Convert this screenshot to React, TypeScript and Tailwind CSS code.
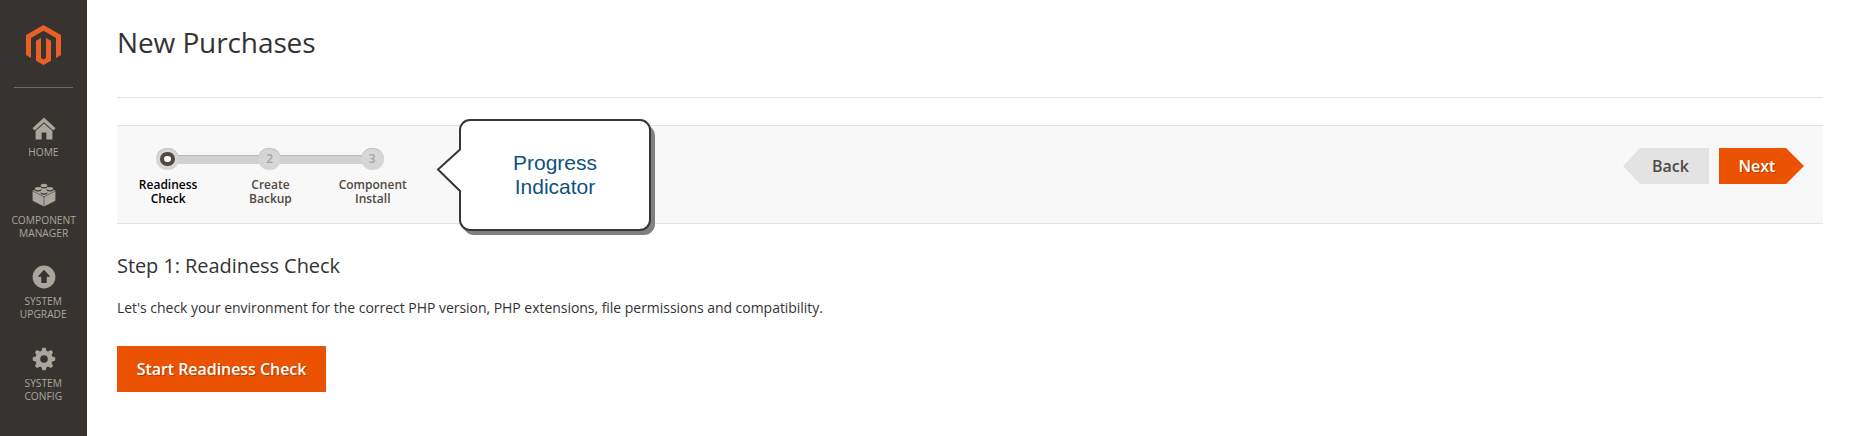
import React from "react";

function HomeIcon() {
  return (
    <svg width="24" height="24" viewBox="0 0 24 24" fill="#aaa69d">
      <path d="M12 0.6 L0.5 11.2 L2.8 13.6 L12 5.2 L21.2 13.6 L23.5 11.2 Z" />
      <path d="M12 6.4 L3.6 14 V22.4 H9.6 V15.4 H14.4 V22.4 H20.4 V14 Z" />
    </svg>
  );
}

function BrickIcon() {
  return (
    <svg width="24" height="24" viewBox="0 0 24 24">
      <path d="M12 2.2 L23.4 7.8 V17.8 L12 23.6 L0.6 17.8 V7.8 Z" fill="#aaa69d" />
      <path d="M0.8 8 L12 13.8 L23.2 8 M12 13.8 V23.6" fill="none" stroke="#5a5651" strokeWidth="0.8" />
      <g fill="#373330">
        <ellipse cx="12" cy="3.5" rx="3.4" ry="1.9" />
        <ellipse cx="6.1" cy="6.6" rx="3.4" ry="1.9" />
        <ellipse cx="17.9" cy="6.6" rx="3.4" ry="1.9" />
        <ellipse cx="12" cy="9.8" rx="3.4" ry="1.9" />
      </g>
      <g fill="#aaa69d">
        <ellipse cx="12" cy="2.5" rx="3.3" ry="1.7" />
        <ellipse cx="6.1" cy="5.6" rx="3.3" ry="1.7" />
        <ellipse cx="17.9" cy="5.6" rx="3.3" ry="1.7" />
        <ellipse cx="12" cy="8.8" rx="3.3" ry="1.7" />
      </g>
    </svg>
  );
}

function UpgradeIcon() {
  return (
    <svg width="24" height="24" viewBox="0 0 24 24">
      <circle cx="12" cy="12" r="11.4" fill="#aaa69d" />
      <path d="M12 4.8 L18.3 11.8 H14.7 V18 H9.3 V11.8 H5.7 Z" fill="#373330" />
    </svg>
  );
}

const gearTurns = ["rotate(0 12 12)", "rotate(45 12 12)", "rotate(90 12 12)", "rotate(135 12 12)"];

function GearIcon() {
  return (
    <svg width="24" height="24" viewBox="0 0 24 24">
      <g fill="#aaa69d">
        <circle cx="12" cy="12" r="8.6" />
        {gearTurns.map((t) => (
          <path key={t} transform={t} d="M9.2 4.5 L10.5 0.7 H13.5 L14.8 4.5 V19.5 L13.5 23.3 H10.5 L9.2 19.5 Z" />
        ))}
      </g>
      <circle cx="12" cy="12" r="3.8" fill="#373330" />
    </svg>
  );
}

function NavItem({ icon, lines, className }: { icon: React.ReactNode; lines: string[]; className: string }) {
  return (
    <a className={`flex w-full flex-col items-center ${className}`}>
      {icon}
      <span className="text-center text-[11px] leading-[13.5px] text-[#aaa69d]">
        {lines.map((l) => (
          <span key={l} className="block origin-center scale-x-[0.93] whitespace-nowrap">{l}</span>
        ))}
      </span>
    </a>
  );
}

function Step({ n, lines, active }: { n: number; lines: string[]; active?: boolean }) {
  return (
    <li className="relative flex w-[102.3px] flex-col items-center">
      {n > 1 && (
        <span className="absolute top-[7px] right-[60px] h-[9px] w-[84px] border-t border-[#b8b8b8] bg-[#d1d1d1]" />
      )}
      <span className="relative -left-[0.65px] flex h-[22px] w-[23px] items-center justify-center rounded-full bg-[#d6d6d6] text-[12px] font-semibold text-[#a6a6a6] shadow-[inset_0_1px_0_#c2c2c2]">
        {active ? <span className="h-[14px] w-[15px] rounded-full border-4 border-[#514943] bg-white" /> : n}
      </span>
      <span className={`mt-[8px] text-center text-[12px] leading-[14px] font-semibold ${active ? "text-black" : "text-[#514943]"}`}>
        {lines[0]}
        <br />
        {lines[1]}
      </span>
    </li>
  );
}

export default function App() {
  return (
    <div className="flex h-[436px] w-[1852px] overflow-hidden bg-white font-['Open_Sans',sans-serif] text-[#333333]">
      <aside className="flex w-[87px] shrink-0 flex-col items-center bg-[#373330]">
        <svg className="mt-[25px] shrink-0" width="35" height="40" viewBox="0 0 35 40" fill="#eb5f26">
          <path d="M17.5 0 L35 10 V30 L30 32.9 V12.9 L17.5 5.8 L5 12.9 V32.9 L0 30 V10 Z" />
          <path d="M15 12.9 V33 L17.5 34.5 L20 33 V12.9 L25 15.8 V35.8 L17.5 40 L10 35.8 V15.8 Z" />
        </svg>
        <div className="mt-[22px] h-px w-[59px] shrink-0 bg-[#736963]" />
        <nav className="flex w-full flex-col">
          <NavItem icon={<HomeIcon />} lines={["HOME"]} className="mt-[29px] gap-[4px]" />
          <NavItem icon={<BrickIcon />} lines={["COMPONENT", "MANAGER"]} className="mt-[24px] gap-[6px]" />
          <NavItem icon={<UpgradeIcon />} lines={["SYSTEM", "UPGRADE"]} className="mt-[25px] gap-[5px]" />
          <NavItem icon={<GearIcon />} lines={["SYSTEM", "CONFIG"]} className="mt-[26px] gap-[5px]" />
        </nav>
      </aside>
      <main className="ml-[30px] w-[1706px]">
        <header className="flex h-[98px] items-start border-b border-[#e3e3e3] pt-[23px]">
          <h1 className="text-[28px] leading-[38px] tracking-[-0.1px]">New Purchases</h1>
        </header>
        <section className="relative mt-[27px] flex h-[99px] items-start justify-between border-y border-[#e3e3e3] bg-[#f8f8f8] pr-[19px]">
          <ol className="mt-[22px] flex">
            <Step n={1} lines={["Readiness", "Check"]} active />
            <Step n={2} lines={["Create", "Backup"]} />
            <Step n={3} lines={["Component", "Install"]} />
          </ol>
          <div className="mt-[22px] flex gap-[10px] text-[16px] leading-[36px] font-semibold">
            <button className="h-[36px] w-[86px] bg-[#e3e3e3] pl-[9px] text-center text-[#514943] [clip-path:polygon(17px_0,100%_0,100%_100%,17px_100%,0_50%)]">
              Back
            </button>
            <button className="h-[36px] w-[85px] bg-[#eb5202] pr-[9px] text-center text-white [clip-path:polygon(0_0,67px_0,100%_50%,67px_100%,0_100%)] [text-shadow:1px_1px_0_rgba(0,0,0,0.25)]">
              Next
            </button>
          </div>
          <div className="absolute top-[-8px] left-[318px] flex h-[120px] w-[220px] items-center justify-center">
            <svg className="absolute inset-0" width="220" height="120" viewBox="0 0 220 120">
              <rect x="28" y="7" width="192" height="110" rx="11" fill="#808080" />
              <path
                d="M35 2 H205 A10 10 0 0 1 215 12 V102 A10 10 0 0 1 205 112 H35 A10 10 0 0 1 25 102 V73 L3 51.5 L25 31.5 V12 A10 10 0 0 1 35 2 Z"
                fill="#fff"
                stroke="#373737"
                strokeWidth="2"
              />
            </svg>
            <p className="relative mb-[7px] ml-[20px] text-center font-['Liberation_Sans',sans-serif] text-[21px] leading-[24px] text-[#0f527d]">
              Progress
              <br />
              Indicator
            </p>
          </div>
        </section>
        <h2 className="mt-[28px] text-[20px] leading-[28px] tracking-[-0.07px]">Step 1: Readiness Check</h2>
        <p className="mt-[18px] text-[14px] leading-[20px] tracking-[-0.035px]">
          Let's check your environment for the correct PHP version, PHP extensions, file permissions and compatibility.
        </p>
        <button className="mt-[28px] block h-[46px] w-[209px] bg-[#eb5202] text-[16px] font-semibold tracking-[-0.05px] text-white [text-shadow:1px_1px_0_rgba(0,0,0,0.25)]">
          Start Readiness Check
        </button>
      </main>
    </div>
  );
}
